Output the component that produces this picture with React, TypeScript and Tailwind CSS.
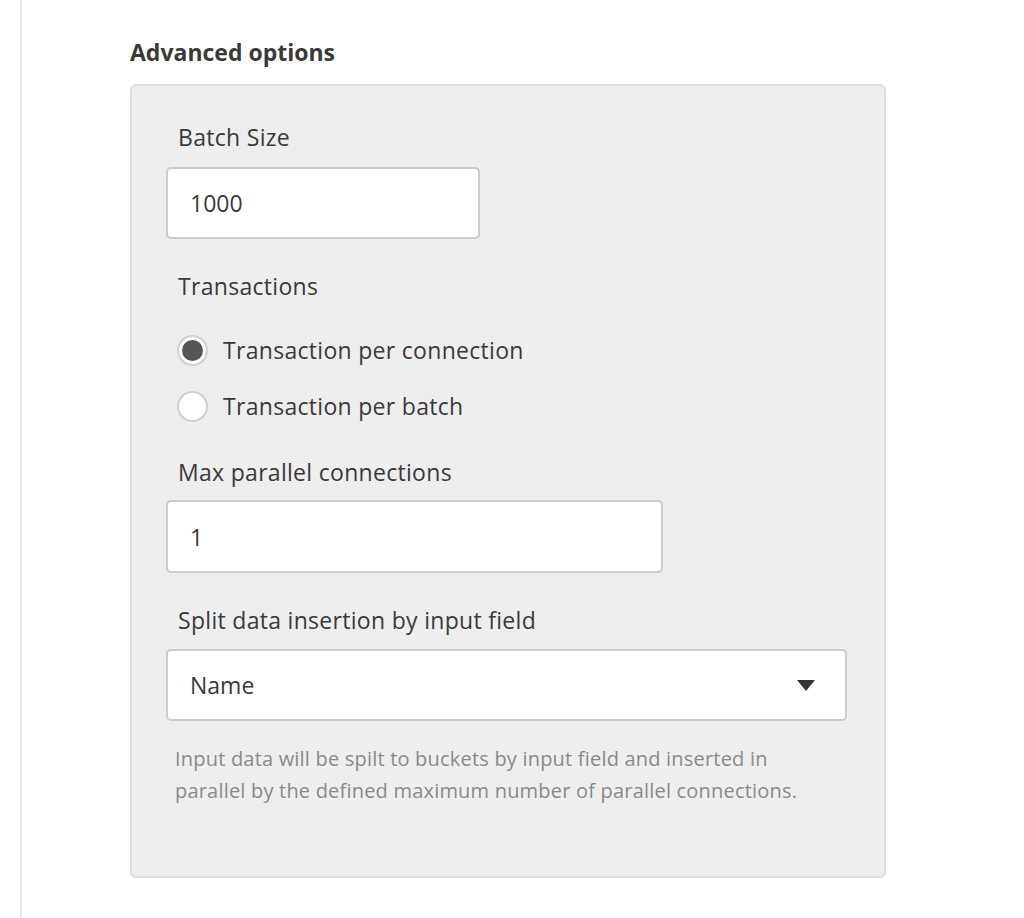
import React, { useState } from 'react';

const font = { fontFamily: '"Open Sans", Lato, sans-serif' };

function Label({ children }: { children: React.ReactNode }) {
  return (
    <div className="h-[28px] flex items-center pl-3 text-[23px] leading-[28px] tracking-[0.3px] text-[#3a3a3a]">
      {children}
    </div>
  );
}

function Radio({ checked, label, onClick }: { checked: boolean; label: string; onClick: () => void }) {
  return (
    <div className="h-[40px] flex items-center pl-[11px] cursor-pointer" onClick={onClick}>
      <span className="w-[31px] h-[31px] rounded-full border-2 border-[#d0d0d0] bg-white flex items-center justify-center shrink-0">
        {checked && <span className="w-[21px] h-[21px] rounded-full bg-[#555555]" />}
      </span>
      <span className="ml-[15px] text-[23px] leading-[28px] tracking-[0.3px] text-[#3a3a3a]">{label}</span>
    </div>
  );
}

export default function App() {
  const [mode, setMode] = useState<'connection' | 'batch'>('connection');

  return (
    <div className="min-h-screen bg-white" style={font}>
      <div className="ml-[20px] min-h-[918px] border-l-2 border-[#e8e8e8] pl-[108px] pt-[38px]">
        <h2 className="h-[28px] flex items-center text-[23px] leading-[28px] font-bold text-[#3a3a3a]">Advanced options</h2>
        <div className="mt-[18px] w-[756px] rounded-[6px] border-2 border-[#dddddd] bg-[#eeeeee] pl-[34px] pt-[37px] pb-[69px]">
          <Label>Batch Size</Label>
          <input
            defaultValue="1000"
            className="mt-[16px] block w-[314px] h-[72px] rounded-[5px] border-2 border-[#cccccc] bg-white px-[22px] text-[23px] text-[#3a3a3a] outline-none"
          />

          <div className="mt-[33px]">
            <Label>Transactions</Label>
          </div>
          <div className="mt-[30px]">
            <Radio checked={mode === 'connection'} label="Transaction per connection" onClick={() => setMode('connection')} />
          </div>
          <div className="mt-[16px]">
            <Radio checked={mode === 'batch'} label="Transaction per batch" onClick={() => setMode('batch')} />
          </div>

          <div className="mt-[32px]">
            <Label>Max parallel connections</Label>
          </div>
          <input
            defaultValue="1"
            className="mt-[14px] block w-[497px] h-[73px] rounded-[5px] border-2 border-[#cccccc] bg-white px-[22px] text-[23px] text-[#3a3a3a] outline-none"
          />

          <div className="mt-[33px]">
            <Label>Split data insertion by input field</Label>
          </div>
          <div className="mt-[15px] w-[681px] h-[72px] rounded-[5px] border-2 border-[#cccccc] bg-white flex items-center justify-between pl-[22px] pr-[30px]">
            <span className="text-[23px] text-[#3a3a3a]">Name</span>
            <svg width="18" height="11" viewBox="0 0 18 11">
              <path d="M0 0 L18 0 L9 11 Z" fill="#333333" />
            </svg>
          </div>

          <p className="mt-[22px] pl-[9px] text-[20px] leading-[32px] tracking-[0.2px] text-[#8a8a8a]">
            Input data will be spilt to buckets by input field and inserted in
            <br />
            parallel by the defined maximum number of parallel connections.
          </p>
        </div>
      </div>
    </div>
  );
}
